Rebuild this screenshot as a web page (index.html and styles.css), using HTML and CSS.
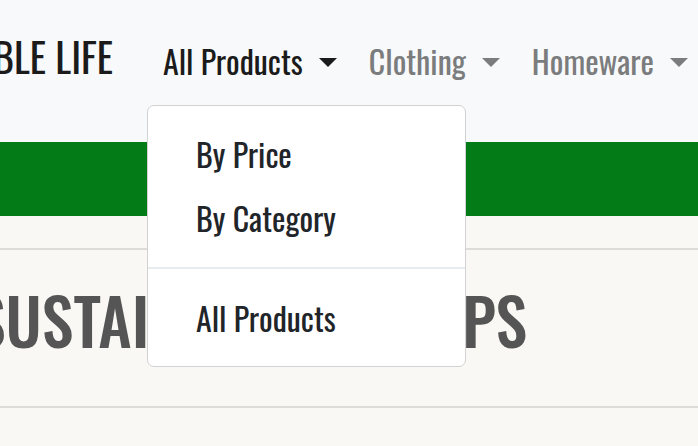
FILE: index.html
```html
<!DOCTYPE html>
<html lang="en">
<head>
<meta charset="utf-8">
<title>Sustainable Life</title>
<link rel="stylesheet" href="styles.css">
</head>
<body>
<header class="navbar">
  <a class="brand" href="#"><span class="brand-text">SUSTAINABLE LIFE</span></a>
  <ul class="nav">
    <li class="nav-item">
      <a class="nav-link active" href="#">All Products<span class="caret"></span></a>
      <div class="dropdown-menu">
        <a class="dropdown-item" href="#">By Price</a>
        <a class="dropdown-item" href="#">By Category</a>
        <div class="dropdown-divider"></div>
        <a class="dropdown-item" href="#">All Products</a>
      </div>
    </li>
    <li class="nav-item">
      <a class="nav-link" href="#">Clothing<span class="caret"></span></a>
    </li>
    <li class="nav-item">
      <a class="nav-link" href="#">Homeware<span class="caret"></span></a>
    </li>
  </ul>
</header>
<div class="banner"></div>
<main class="content">
  <hr class="rule">
  <h1 class="title">SUSTAINABLE SHOPS</h1>
  <hr class="rule">
</main>
</body>
</html>
```
FILE: styles.css
```css
* { box-sizing: border-box; }
html, body { margin: 0; padding: 0; }
body {
  background: #f9f8f5;
  font-family: "Oswald", "Roboto Condensed", "Liberation Sans Narrow", sans-serif;
  font-size: 32px;
  color: #212529;
  overflow: hidden;
  width: 698px;
  height: 446px;
}
a { text-decoration: none; }

.navbar {
  height: 142px;
  background: #f8f9fa;
  display: flex;
  align-items: flex-start;
  padding-top: 21px;
}
.brand {
  flex-shrink: 0;
  width: 113px;
  margin-right: 34px;
  display: flex;
  justify-content: flex-end;
  overflow: hidden;
  white-space: nowrap;
  font-size: 40px;
  line-height: 60px;
  padding-top: 5px;
  color: #1b1b1b;
}
.nav {
  flex-shrink: 0;
  display: flex;
  list-style: none;
  margin: 0;
  padding: 0;
}
.nav-item { position: relative; flex-shrink: 0; }
.nav-link {
  display: block;
  padding: 16px 16px;
  line-height: 48px;
  color: #7b7c7d;
  white-space: nowrap;
}
.nav-link.active { color: #1b1b1b; }
.caret {
  display: inline-block;
  margin-left: 16px;
  vertical-align: 8px;
  border-top: 9.6px solid currentColor;
  border-left: 9.6px solid transparent;
  border-right: 9.6px solid transparent;
}

.dropdown-menu {
  position: absolute;
  top: 100%;
  left: 0;
  margin-top: 4px;
  width: 319px;
  background: #fff;
  border: 1px solid #d2d2d2;
  border-radius: 7px;
  padding: 16px 0;
  z-index: 10;
}
.dropdown-item {
  display: block;
  padding: 8px 48px;
  line-height: 48px;
  color: #212529;
  white-space: nowrap;
}
.dropdown-divider {
  height: 0;
  margin: 17px 0;
  border-top: 2px solid #e9ecef;
}

.banner {
  height: 74px;
  background: #037c17;
}
.content { padding-top: 32px; }
.rule {
  margin: 0;
  border: 0;
  border-top: 2px solid #dedcd8;
}
.title {
  margin: 31px 0 48px -26px;
  font-size: 64px;
  line-height: 77px;
  font-weight: 500;
  word-spacing: 34px;
  color: #555;
  white-space: nowrap;
}
```
